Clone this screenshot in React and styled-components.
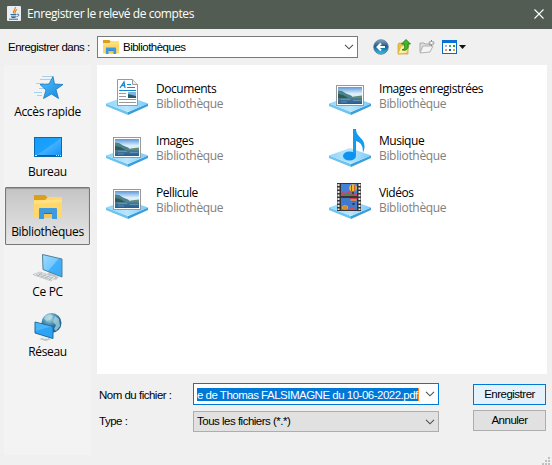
import React from "react";
import styled, { createGlobalStyle } from "styled-components";

const GlobalStyle = createGlobalStyle`
  * { box-sizing: border-box; }
  body { margin: 0; background: #f0f0f0; }
`;

const segoe = `"Open Sans", "Noto Sans", sans-serif`;
const dialogFont = `"Liberation Sans", Arial, sans-serif`;

const Dialog = styled.div`
  width: 552px;
  height: 465px;
  overflow: hidden;
  display: flex;
  flex-direction: column;
  background: #f0f0f0;
  color: #000;
  font: 11.5px/15px ${dialogFont};
  letter-spacing: -0.5px;
  white-space: nowrap;
`;

const TitleBar = styled.header`
  height: 29px;
  flex: none;
  display: flex;
  align-items: center;
  padding: 0 8px 2px 7px;
  background: #525c52;
  color: #fff;
  font: 12px/16px ${segoe};
  letter-spacing: -0.42px;
`;

const Title = styled.h1`
  margin: 0 auto 0 6px;
  font: inherit;
`;

const Toolbar = styled.div`
  height: 36px;
  flex: none;
  display: flex;
  align-items: center;
  padding: 0 0 0 8px;
`;

const ToolbarLabel = styled.label`
  width: 89px;
`;

const LocationBox = styled.div`
  width: 261px;
  height: 22px;
  display: flex;
  align-items: center;
  padding: 0 3px 0 5px;
  border: 1px solid #7a7a7a;
  background: #fff;
`;

const LocationName = styled.span`
  margin: 0 auto 0 4px;
`;

const ToolIcons = styled.div`
  display: flex;
  align-items: center;
  gap: 7px;
  margin-left: 15px;
`;

const Content = styled.div`
  flex: 1;
  display: grid;
  grid-template-columns: 87px 450px;
  column-gap: 6px;
  padding: 0 5px 10px 4px;
`;

const Places = styled.nav`
  padding: 2px 1px;
  display: flex;
  flex-direction: column;
  gap: 2px;
  background: #f3f3f3;
`;

const Place = styled.div`
  height: 58px;
  padding-top: ${(p) => (p.$selected ? 4 : 5)}px;
  display: flex;
  flex-direction: column;
  align-items: center;
  font: 12px/16px ${segoe};
  letter-spacing: -0.33px;
  border: ${(p) => (p.$selected ? "1px solid #777" : "0")};
  border-radius: 1px;
  background: ${(p) => (p.$selected ? "linear-gradient(#c4c4c4, #e7e7e7)" : "transparent")};
  box-shadow: ${(p) => (p.$selected ? "inset 0 1px 1px #999" : "none")};
`;

const Main = styled.main`
  display: flex;
  flex-direction: column;
`;

const FileList = styled.div`
  height: 309px;
  padding: 11px 0 0 9px;
  display: grid;
  grid-template-columns: 223px 1fr;
  grid-auto-rows: 52px;
  align-content: start;
  background: #fff;
`;

const Library = styled.div`
  display: flex;
  gap: 8px;
`;

const LibraryText = styled.div`
  padding-top: 5px;
  font: 12px/15px ${segoe};
`;

const Name = styled.div`
  letter-spacing: -0.45px;
`;

const Kind = styled.div`
  color: #808080;
  letter-spacing: -0.33px;
`;

const Form = styled.div`
  display: grid;
  grid-template-columns: 94px 246px 73px;
  grid-template-rows: 22px 21px;
  row-gap: 6px;
  padding: 9px 0 0 2px;
`;

const FormLabel = styled.label`
  padding-top: ${(p) => p.$top}px;
`;

const Combo = styled.div`
  display: flex;
  align-items: center;
  justify-content: space-between;
  padding: 0 3px;
  border: 1px solid ${(p) => (p.$focused ? "#0078d7" : "#adadad")};
  background: ${(p) => (p.$focused ? "#fff" : "#e1e1e1")};
`;

const Selection = styled.span`
  width: 222px;
  height: 13px;
  line-height: 14px;
  background: #0078d7;
  color: #fff;
  border-right: 1px solid #ff8728;
`;

const Button = styled.button`
  width: 73px;
  height: 21px;
  margin: ${(p) => (p.$primary ? "1px 0 0 34px" : "-1px 0 0 34px")};
  padding: 0;
  font: inherit;
  letter-spacing: inherit;
  color: #000;
  border: 1px solid ${(p) => (p.$primary ? "#0078d7" : "#adadad")};
  background: ${(p) => (p.$primary ? "#e5f1fb" : "#e1e1e1")};
`;

const Grip = styled.svg`
  position: absolute;
  left: 542px;
  top: 457px;
`;

const Chevron = () => (
  <svg width="10" height="6" viewBox="0 0 10 6">
    <path d="M1 .8l4 4 4-4" fill="none" stroke="#505050" strokeWidth="1.1" />
  </svg>
);

const JavaIcon = () => (
  <svg width="14" height="15" viewBox="0 0 14 15">
    <rect width="14" height="15" rx="1" fill="#e9eef2" />
    <path d="M8.4 1C9 3.600 5 4 7 7.500M10 3.500C7.500 4.800 8.500 5.500 8 7.500" fill="none" stroke="#f08018" strokeWidth="1.200" />
    <path d="M3.500 8.500h6M4 10.200h5M4.500 11.500h4M2 13.200h9M10 8.300c3-.5 2 2-.5 2.400" fill="none" stroke="#356a96" />
  </svg>
);

const CloseIcon = () => (
  <svg width="10" height="10" viewBox="0 0 10 10">
    <path d="M.5.5l9 9M9.500.5l-9 9" stroke="#fff" strokeWidth="1.100" />
  </svg>
);

const FolderIcon = ({ width, height }) => (
  <svg width={width} height={height} viewBox="0 0 28 24" preserveAspectRatio="none">
    <path d="M0 0h11l3 3v3H0z" fill="#daa01c" />
    <path d="M0 5h11l3-3h13q1 0 1 1v19q0 1-1 1H1q-1 0-1-1z" fill="#ffd869" />
    <path d="M0 6l28-2v3L0 9z" fill="#ffe086" />
    <path d="M5 14q0-1 1-1h16q1 0 1 1v10h-5v-5h-8v5H5z" fill="#3e9ade" />
    <path d="M10 18h8v1h-8z" fill="#2b6fa8" />
    <path d="M10 19h8v4h-8z" fill="#f6c651" />
  </svg>
);

const BackIcon = () => (
  <svg width="16" height="16" viewBox="0 0 16 16">
    <defs>
      <linearGradient id="back" x2="0" y2="1">
        <stop stopColor="#8da9c0" />
        <stop offset=".45" stopColor="#155b91" />
        <stop offset="1" stopColor="#35c5ed" />
      </linearGradient>
    </defs>
    <circle cx="8" cy="8" r="7.300" fill="url(#back)" stroke="#5d7891" strokeWidth=".8" />
    <path d="M8 4.500L4.500 8 8 11.500M5 8h7" fill="none" stroke="#fff" strokeWidth="2" />
  </svg>
);

const UpIcon = () => (
  <svg width="16" height="16" viewBox="0 0 16 16">
    <path d="M2 5l1-1h3l1 1h5v10H2z" fill="#e9c34e" stroke="#cda02a" strokeWidth=".7" />
    <path d="M2 15L5 7l8-1-2 8z" fill="#fff0a3" stroke="#d6ae35" strokeWidth=".7" />
    <path d="M6 10.800C9.500 10.500 8.500 7 8.300 5H5.500L10 .5 14.500 5H12c1 5-2 7.500-6 5.800z" fill="#3bbb29" stroke="#187517" strokeWidth=".8" />
  </svg>
);

const NewFolderIcon = () => (
  <svg width="16" height="16" viewBox="0 0 16 16">
    <path d="M1 13V4h4l1 1h5v4" fill="#dedede" stroke="#aaa" />
    <path d="M1 14L4 7h10l-3 6z" fill="#f5f5f5" stroke="#b2b2b2" />
    <path d="M12.500 1v6M9.500 4h6M10.500 2l4 4M14.500 2l-4 4" stroke="#858585" />
    <circle cx="12.500" cy="4" r="1.200" fill="#fff" />
  </svg>
);

const ViewIcon = () => (
  <svg width="25" height="14" viewBox="0 0 25 14">
    <rect x=".5" y=".5" width="14" height="13" fill="#fff" stroke="#0b68c6" />
    <path d="M0 0h15v3H0z" fill="#0873d5" />
    <path d="M3 5h2v2H3z" fill="#a6b3ef" />
    <path d="M7 5h2v2H7z" fill="#48a868" />
    <path d="M11 5h2v2h-2z" fill="#16a62b" />
    <path d="M3 9h2v2H3z" fill="#f58e70" />
    <path d="M7 9h2v2H7z" fill="#1657b5" />
    <path d="M11 9h2v2h-2z" fill="#dfa52d" />
    <path d="M17 5h7l-3.500 4z" fill="#111" />
  </svg>
);

const StarIcon = () => (
  <svg width="32" height="32" viewBox="0 0 32 32">
    <defs>
      <linearGradient id="star" x2="1" y2="1">
        <stop stopColor="#53c2ff" />
        <stop offset="1" stopColor="#1685dc" />
      </linearGradient>
    </defs>
    <path d="M10 4.500h11M8 7.500h11M4 11.500h8M7 16.500h6M2 20.500h8M5 23.500h5" stroke="#9bcdf0" strokeWidth=".9" />
    <path d="M21 4.500l1.500 7.500 8.500.5-7 5 2.500 9-7-4.500-8 4.500 2.500-8.500-6-5.500 9-.5z" fill="url(#star)" stroke="#1679bd" strokeWidth=".8" />
  </svg>
);

const DesktopIcon = () => (
  <svg width="32" height="32" viewBox="0 0 32 32">
    <defs>
      <linearGradient id="desk" x2="1" y2="1">
        <stop stopColor="#159af6" />
        <stop offset=".5" stopColor="#1ba1ff" />
        <stop offset=".52" stopColor="#42b0ff" />
        <stop offset="1" stopColor="#0e92f6" />
      </linearGradient>
    </defs>
    <rect x="2.500" y="5.500" width="27" height="19" fill="url(#desk)" stroke="#076bae" />
    <path d="M3 23.500h26" stroke="#075e9b" />
    <path d="M3 23.500h2M24 23.500h1M26 23.500h1M28 23.500h1" stroke="#d8f1ff" />
  </svg>
);

const LibrariesIcon = () => (
  <svg width="32" height="32" viewBox="0 0 32 32">
    <svg x="2" y="3"><FolderIcon width={28} height={24} /></svg>
  </svg>
);

const ComputerIcon = () => (
  <svg width="32" height="32" viewBox="0 0 32 32">
    <defs>
      <linearGradient id="pc" x2="1" y2="1">
        <stop stopColor="#a2dcff" />
        <stop offset=".5" stopColor="#72c8ff" />
        <stop offset=".52" stopColor="#42b0fa" />
        <stop offset="1" stopColor="#3aaaf5" />
      </linearGradient>
    </defs>
    <path d="M17 20l10 5-3 3-10-4z" fill="#c4cbd0" />
    <path d="M10.500 2.500L30 7v18l-19-7.500z" fill="url(#pc)" stroke="#4f7f9b" />
    <path d="M1 22.500L8 20l16 5-5 4z" fill="#eceff1" stroke="#b3babe" strokeWidth=".7" />
    <path d="M4 22.500l15 5M6.500 21.500l14 4.500M5 24l5-3M9 25l5-2.500M13 26.500l5-3M17 28l4-3" stroke="#a3abb0" strokeWidth=".7" />
  </svg>
);

const NetworkIcon = () => (
  <svg width="32" height="32" viewBox="0 0 32 32">
    <defs>
      <radialGradient id="globe" cx=".4" cy=".25">
        <stop stopColor="#c5e3ee" />
        <stop offset=".55" stopColor="#5b9fbd" />
        <stop offset="1" stopColor="#246b93" />
      </radialGradient>
    </defs>
    <circle cx="19.500" cy="11" r="10" fill="url(#globe)" />
    <path d="M13 4l5-2 3 2-2 3-4 2-3-2zM23 4l4 3 1 7-4 5-2-2 2-4-3-3z" fill="#b8dbe5" opacity=".7" />
    <path d="M7 27l7-2 5 2-5 2z" fill="#bac4c9" />
    <path d="M11 23v4h5v-3z" fill="#e7edef" />
    <path d="M3 10l18 4.500v12L3 21z" fill="#2ca3f5" stroke="#226b96" />
    <path d="M3.500 10.500l16 4L4 19z" fill="#6ac7ff" opacity=".5" />
  </svg>
);

const Photo = () => (
  <>
    <rect x="7.500" y="9.500" width="27" height="20" fill="#fff" stroke="#999" />
    <rect x="9" y="11" width="24" height="11" fill="url(#sky)" />
    <path d="M9 14.500l4 .5 4 2.500 5 2 3 2.500H9z" fill="#4a8289" />
    <path d="M9 18l5 1 5 3H9z" fill="#2e5b55" />
    <path d="M20 22l5-1.500 8-1V22z" fill="#648d6c" />
    <rect x="9" y="22" width="24" height="6" fill="url(#lake)" />
    <path d="M12 23.500h9M24 24.500h8M12 26h6" stroke="#7fa9c2" strokeWidth=".6" />
  </>
);

const Page = () => (
  <>
    <path d="M11.500 3.500h15l5 5v21h-20z" fill="#fff" stroke="#999" />
    <path d="M26.500 3.500v5h5" fill="#eee" stroke="#999" />
    <path d="M14 12l4-6 1 6M15.500 9.500h3" fill="none" stroke="#1688d0" strokeWidth="1.300" />
    <path d="M21 8.500h4M21 11.500h8M13 14.500h17" stroke="#1688d0" />
    <path d="M13 17.500h7M13 20.500h7M13 23.500h17M13 26.500h17" stroke="#999" />
    <path d="M22 16h8v6h-8z" fill="#79b8dc" />
    <path d="M22 18l4 1 4 1v2h-8z" fill="#285a67" />
  </>
);

const Note = () => (
  <>
    <path d="M24 1h3c0 8 8.500 9 8.500 17 0 4-1 5-1.500 7 0-8-2-10-7-12v14h-3z" fill="#139bef" />
    <ellipse cx="20.500" cy="28" rx="6.500" ry="4.600" fill="#0d92ef" />
  </>
);

const Film = () => (
  <>
    <rect x="8" y="3" width="24" height="28" fill="#363636" />
    <path d="M9.500 4v26M30.500 4v26" stroke="#e8e8e8" strokeWidth="2" strokeDasharray="2 1.500" />
    <rect x="12" y="4" width="16" height="12" fill="#467fd8" />
    <rect x="12" y="18" width="16" height="12" fill="#3e79d2" />
    <path d="M12 13l2-1 3 1 3-2 3 3 5-1v3H12z" fill="#d94068" />
    <path d="M12 15l6-1 10 1v1H12z" fill="#3d9440" />
    <ellipse cx="24" cy="8" rx="3.800" ry="3.700" fill="#f2ba2e" />
    <path d="M22.500 5v6M25.800 5v6" stroke="#b13d35" />
    <path d="M22.500 11.500h3l-1 3h-1z" fill="#4c3a35" />
    <path d="M21 18h7c0 2-1.500 3-3 4h-1c-1.500-1-3-2-3-4z" fill="#c73c4f" />
    <path d="M21.500 20h6" stroke="#f2c43d" />
    <path d="M23.500 23h2v2h-2z" fill="#432e28" />
    <ellipse cx="16" cy="27.500" rx="3" ry="2.500" fill="#f2b42c" />
    <path d="M15 25.500V30M17 25.500V30" stroke="#c14736" strokeWidth=".8" />
    <path d="M20 30c0-3 5-3 7 0z" fill="#d94a58" />
  </>
);

const artwork = { page: Page, photo: Photo, note: Note, film: Film };

const LibraryIcon = ({ type }) => {
  const Art = artwork[type];
  return (
    <svg width="42" height="42" viewBox="0 0 42 42">
      <defs>
        <linearGradient id="plate" x2="1">
          <stop stopColor="#8fd6fc" />
          <stop offset=".5" stopColor="#b9e6fd" />
          <stop offset="1" stopColor="#79caf8" />
        </linearGradient>
        <linearGradient id="sky" x2="0" y2="1">
          <stop stopColor="#5b97da" />
          <stop offset=".6" stopColor="#dceefa" />
        </linearGradient>
        <linearGradient id="lake" x2="0" y2="1">
          <stop stopColor="#4f7d95" />
          <stop offset="1" stopColor="#215e97" />
        </linearGradient>
      </defs>
      <path d="M0 27.500L22 36v3L0 30z" fill="#6cc3ed" />
      <path d="M42 27.500L22 36v3l20-9z" fill="#399ed9" />
      <path d="M0 27.500L21 20l21 7.500-20 8.500z" fill="url(#plate)" />
      <Art />
    </svg>
  );
};

const places = [
  ["Accès rapide", StarIcon],
  ["Bureau", DesktopIcon],
  ["Bibliothèques", LibrariesIcon],
  ["Ce PC", ComputerIcon],
  ["Réseau", NetworkIcon],
];

const libraries = [
  ["Documents", "page"],
  ["Images enregistrées", "photo"],
  ["Images", "photo"],
  ["Musique", "note"],
  ["Pellicule", "photo"],
  ["Vidéos", "film"],
];

export default function App() {
  return (
    <Dialog>
      <GlobalStyle />
      <TitleBar>
        <JavaIcon />
        <Title>Enregistrer le relevé de comptes</Title>
        <CloseIcon />
      </TitleBar>
      <Toolbar>
        <ToolbarLabel>Enregistrer dans :</ToolbarLabel>
        <LocationBox>
          <FolderIcon width={16} height={14} />
          <LocationName>Bibliothèques</LocationName>
          <Chevron />
        </LocationBox>
        <ToolIcons>
          <BackIcon />
          <UpIcon />
          <NewFolderIcon />
          <ViewIcon />
        </ToolIcons>
      </Toolbar>
      <Content>
        <Places>
          {places.map(([name, Icon]) => (
            <Place key={name} $selected={name === "Bibliothèques"}>
              <Icon />
              <span>{name}</span>
            </Place>
          ))}
        </Places>
        <Main>
          <FileList>
            {libraries.map(([name, type]) => (
              <Library key={name}>
                <LibraryIcon type={type} />
                <LibraryText>
                  <Name>{name}</Name>
                  <Kind>Bibliothèque</Kind>
                </LibraryText>
              </Library>
            ))}
          </FileList>
          <Form>
            <FormLabel $top={5}>Nom du fichier :</FormLabel>
            <Combo $focused>
              <Selection>e de Thomas FALSIMAGNE du 10-06-2022.pdf</Selection>
              <Chevron />
            </Combo>
            <Button $primary>Enregistrer</Button>
            <FormLabel $top={3}>Type :</FormLabel>
            <Combo>
              <span>Tous les fichiers (*.*)</span>
              <Chevron />
            </Combo>
            <Button>Annuler</Button>
          </Form>
        </Main>
      </Content>
      <Grip width="8" height="8" viewBox="0 0 8 8">
        <path d="M6 0h2v2H6zM3 3h2v2H3zM6 3h2v2H6zM0 6h2v2H0zM3 6h2v2H3zM6 6h2v2H6z" fill="#bfbfbf" />
      </Grip>
    </Dialog>
  );
}
